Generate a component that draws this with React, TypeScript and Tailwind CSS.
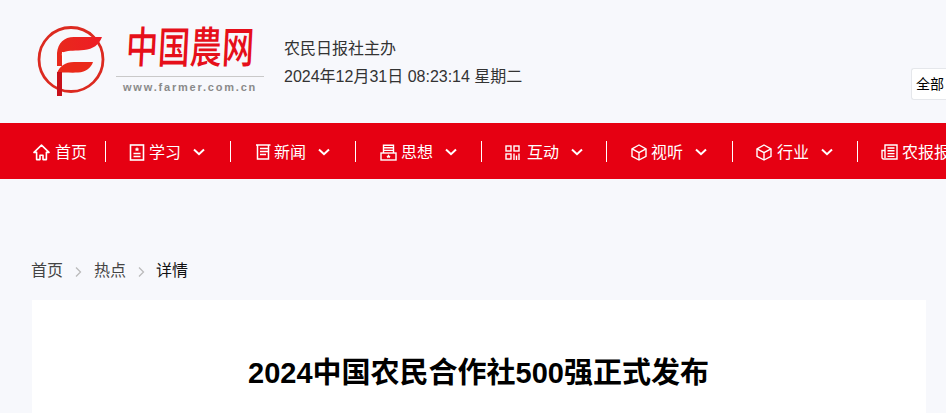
import React from "react";

const font = { fontFamily: '"Liberation Sans","Noto Sans CJK SC",sans-serif' };

function Chevron() {
  return (
    <svg width="12" height="8" viewBox="0 0 12 8" fill="none" stroke="#fff" strokeWidth="2" className="ml-[12px] shrink-0">
      <path d="M1 1.5 6 6.200l5-4.700" />
    </svg>
  );
}

const Home = () => (
  <svg width="17" height="17" viewBox="0 0 17 17" fill="none" stroke="#fff" strokeWidth="1.6" strokeLinejoin="round" className="shrink-0">
    <path d="M8.500 1.200 1 8.400h2.600v7.200h3.400v-4.400h3v4.400h3.400V8.400H16z" />
  </svg>
);
const Study = () => (
  <svg width="16" height="17" viewBox="0 0 16 17" fill="none" stroke="#fff" strokeWidth="1.600" className="shrink-0">
    <rect x="1.500" y="1" width="13" height="15" />
    <path d="M4.500 9.500h7M4.500 12.500h7" strokeWidth="1.500" />
    <path d="m8 3 .8 1.500 1.500.2-1.100 1 .3 1.500L8 6.500l-1.500.7.300-1.500-1.100-1 1.500-.2z" fill="#fff" stroke="none" />
  </svg>
);
const News = () => (
  <svg width="16" height="16" viewBox="0 0 16 16" fill="none" stroke="#fff" strokeWidth="1.500" className="shrink-0">
    <path d="M1 1h14.500M2.500 1v14h11V1" />
    <path d="M5 4.500h8M5 7.500h8M5 10.500h6" />
  </svg>
);
const Think = () => (
  <svg width="17" height="17" viewBox="0 0 17 17" fill="none" stroke="#fff" strokeWidth="1.400" className="shrink-0">
    <path d="M3.500 9V1.200h10V9" />
    <path d="M3.500 3.800h10M3.500 6.400h10" />
    <rect x="1" y="9" width="15" height="7" />
    <path d="m8.500 10.300.8 1.500 1.400.1-1 1 .3 1.400-1.500-.7-1.500.7.3-1.400-1-1 1.400-.1z" fill="#fff" stroke="none" />
  </svg>
);
const Grid = () => (
  <svg width="15" height="15" viewBox="0 0 15 15" fill="none" stroke="#fff" strokeWidth="1.400" className="shrink-0">
    <rect x="1" y="1" width="5" height="5" />
    <rect x="9" y="1" width="5" height="5" />
    <rect x="1" y="9" width="5" height="5" />
    <path d="M9 8.500V15M11.500 10.500V15M14 8.500V15" />
  </svg>
);
const Box = () => (
  <svg width="16" height="17" viewBox="0 0 16 17" fill="none" stroke="#fff" strokeWidth="1.400" strokeLinejoin="round" className="shrink-0">
    <path d="M8 1 15 4.800v7.600L8 16l-7-3.600V4.800z" />
    <path d="M1 4.800 8 8.600l7-3.800M8 8.600V16" />
  </svg>
);
const Paper = () => (
  <svg width="17" height="16" viewBox="0 0 17 16" fill="none" stroke="#fff" strokeWidth="1.400" className="shrink-0">
    <path d="M4 14V1h12v14H2.500A1.500 1.500 0 0 1 1 13.500V6.500h3" />
    <path d="M6.500 4h7M6.500 6.800h7M6.500 9.600h7M6.500 12.400h7" />
  </svg>
);

function Sep() {
  return <span className="w-px h-[21px] mb-[1px] bg-white shrink-0" />;
}

function NavItem({ icon, label, box, gap }: { icon: React.ReactNode; label: string; box: string; gap: string }) {
  return (
    <div className={`flex items-center shrink-0 ${box}`}>
      {icon}
      <span className={`${gap} pt-[2px] whitespace-nowrap`}>{label}</span>
      <Chevron />
    </div>
  );
}

function Logo() {
  return (
    <div className="flex items-start shrink-0">
      <svg width="70" height="72" viewBox="0 0 70 72" className="shrink-0 mt-[26px]">
        <defs>
          <linearGradient id="lf" x1="0" x2="1" y1="0" y2="0">
            <stop offset="0" stopColor="#e8291c" />
            <stop offset="1" stopColor="#ee1c25" />
          </linearGradient>
        </defs>
        <circle cx="35" cy="33.500" r="32" fill="none" stroke="#dc2a20" strokeWidth="2.800" />
        <path d="M21 40V27C22 17 28 11 38 11H66C63 19 57 23 48 24 40 25 33 24 28 26 25 27 26 28 26 30V40z" fill="url(#lf)" />
        <path d="M21 47C24 40 29 36 38 36H57C55 42 50 46 42 46.500 34 47 28 46 21 47z" fill="#ea2a1a" />
        <rect x="21" y="46" width="5" height="24" fill="#c8101a" />
        <rect x="26" y="26" width="1.500" height="11" fill="#fff" />
      </svg>
      <div className="ml-[10px] w-[148px] mt-[21px]">
        <div className="h-[54px] pl-[10px] flex items-center text-[#e60f1a] text-[32px] font-medium leading-none whitespace-nowrap scale-y-[1.35] -skew-x-[4deg] origin-center">
          中国農网
        </div>
        <div className="border-t border-[#c9c9c9] mt-[1px] pt-[3px] pl-[7px] text-[11px] leading-[15px] font-bold text-[#8a8a8a] tracking-[1.800px] whitespace-nowrap">
          www.farmer.com.cn
        </div>
      </div>
    </div>
  );
}

export default function App() {
  return (
    <div className="w-[946px] h-[413px] overflow-hidden bg-[#f7f8fc]" style={font}>
      <header className="h-[123px] flex items-start pl-[36px]">
        <Logo />
        <div className="ml-[20px] pt-[35px] text-[16px] text-[#333] leading-[28px]">
          <div>农民日报社主办</div>
          <div className="whitespace-nowrap">2024年12月31日 08:23:14 星期二</div>
        </div>
        <div className="ml-auto mt-[68px] w-[35px] h-[32px] bg-white border border-r-0 border-[#e5e7eb] rounded-l-[3px] pl-[4px] text-[14px] leading-[30px] text-black whitespace-nowrap overflow-hidden">
          全部
        </div>
      </header>
      <nav className="h-[56px] pt-[2px] bg-[#e60012] flex items-center text-white text-[16px] overflow-hidden">
        <div className="flex items-center justify-end shrink-0 w-[87px] mr-[18px]">
          <Home />
          <span className="ml-[5px] pt-[2px] whitespace-nowrap">首页</span>
        </div>
        <Sep />
        <NavItem icon={<Study />} label="学习" box="w-[124px] pl-[23px]" gap="ml-[4px]" />
        <Sep />
        <NavItem icon={<News />} label="新闻" box="w-[124px] pl-[24px]" gap="ml-[3px]" />
        <Sep />
        <NavItem icon={<Think />} label="思想" box="w-[125px] pl-[24px]" gap="ml-[4px]" />
        <Sep />
        <NavItem icon={<Grid />} label="互动" box="w-[124px] pl-[23px]" gap="ml-[7px]" />
        <Sep />
        <NavItem icon={<Box />} label="视听" box="w-[125px] pl-[24px]" gap="ml-[4px]" />
        <Sep />
        <NavItem icon={<Box />} label="行业" box="w-[124px] pl-[23px]" gap="ml-[5px]" />
        <Sep />
        <div className="flex items-center shrink-0 pl-[23px]">
          <Paper />
          <span className="ml-[4px] pt-[2px] whitespace-nowrap">农报报刊</span>
        </div>
      </nav>
      <div className="px-[32px]">
        <div className="h-[121px] pt-[82px] flex items-start text-[16px] leading-[20px] text-[#444]">
          <span className="-ml-[1px]">首页</span>
          <svg width="8" height="12" viewBox="0 0 8 12" fill="none" stroke="#bbb" strokeWidth="1.300" className="ml-[11px] mr-[12px] mt-[5px]"><path d="m2 1.500 4.500 4.500L2 10.500" /></svg>
          <span>热点</span>
          <svg width="8" height="12" viewBox="0 0 8 12" fill="none" stroke="#bbb" strokeWidth="1.300" className="mx-[11px] mt-[5px]"><path d="m2 1.500 4.500 4.500L2 10.500" /></svg>
          <span className="text-[#111]">详情</span>
        </div>
        <div className="w-[894px] h-[200px] bg-white pt-[55px] pr-[1px] text-center">
          <h1 className="text-[29px] leading-[36px] font-bold text-black">2024中国农民合作社500强正式发布</h1>
        </div>
      </div>
    </div>
  );
}
